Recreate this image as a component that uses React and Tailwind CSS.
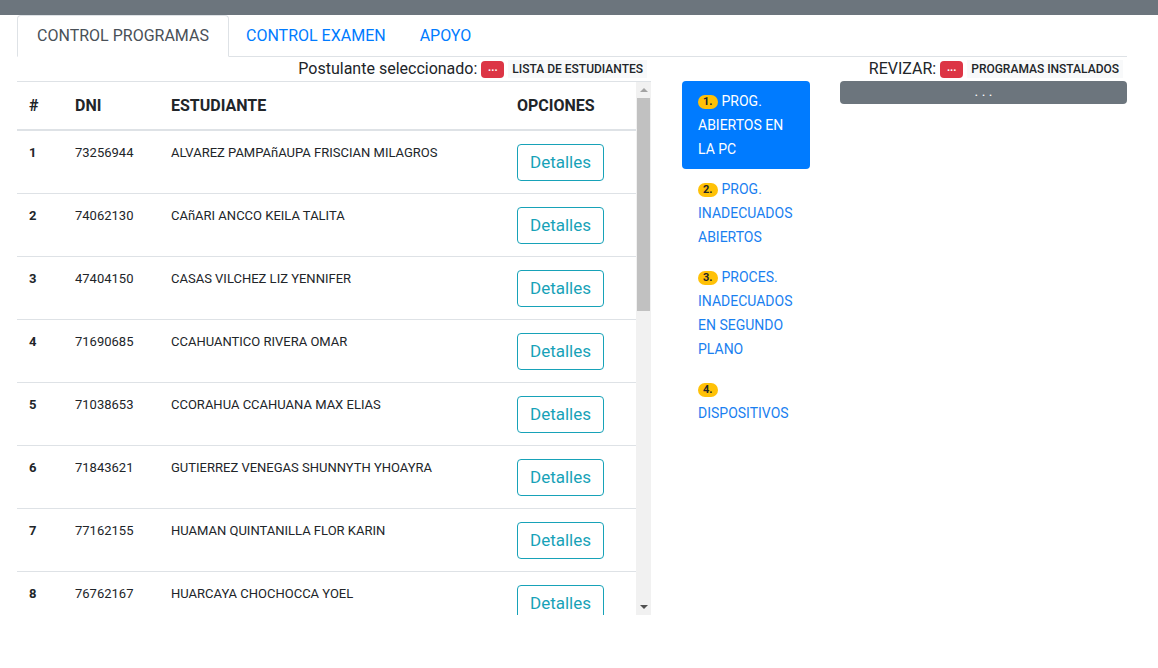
import React from "react";

const ESTUDIANTES = [
  { dni: "73256944", nombre: "ALVAREZ PAMPAñAUPA FRISCIAN MILAGROS" },
  { dni: "74062130", nombre: "CAñARI ANCCO KEILA TALITA" },
  { dni: "47404150", nombre: "CASAS VILCHEZ LIZ YENNIFER" },
  { dni: "71690685", nombre: "CCAHUANTICO RIVERA OMAR" },
  { dni: "71038653", nombre: "CCORAHUA CCAHUANA MAX ELIAS" },
  { dni: "71843621", nombre: "GUTIERREZ VENEGAS SHUNNYTH YHOAYRA" },
  { dni: "77162155", nombre: "HUAMAN QUINTANILLA FLOR KARIN" },
  { dni: "76762167", nombre: "HUARCAYA CHOCHOCCA YOEL" },
];

const OPCIONES = [
  { n: "1.", lines: ["PROG.", "ABIERTOS EN", "LA PC"], active: true },
  { n: "2.", lines: ["PROG.", "INADECUADOS", "ABIERTOS"] },
  { n: "3.", lines: ["PROCES.", "INADECUADOS", "EN SEGUNDO", "PLANO"] },
  { n: "4.", lines: ["", "DISPOSITIVOS"] },
];

function RedBadge() {
  return (
    <span className="inline-flex items-center justify-center w-[23px] h-[17px] rounded-[4px] bg-[#dc3545] text-white text-[11px] font-bold leading-none pb-[3px]">
      ...
    </span>
  );
}

// fake scrollbar for the student list
function Scrollbar() {
  return (
    <div className="w-[15px] h-full bg-[#f1f1f1] flex flex-col items-center shrink-0">
      <div className="h-[16px] w-full flex items-center justify-center">
        <div className="w-0 h-0 border-l-[4px] border-r-[4px] border-b-[4px] border-l-transparent border-r-transparent border-b-[#a3a3a3]" />
      </div>
      <div className="w-[13px] h-[213px] bg-[#c1c1c1]" />
      <div className="flex-1" />
      <div className="h-[16px] w-full flex items-center justify-center">
        <div className="w-0 h-0 border-l-[4px] border-r-[4px] border-t-[4px] border-l-transparent border-r-transparent border-t-[#505050]" />
      </div>
    </div>
  );
}

export default function App() {
  return (
    <div className="w-[1158px] h-[668px] bg-white overflow-hidden font-['Roboto',sans-serif] text-[#212529]">
      {/* top bar */}
      <div className="h-[15px] bg-[#6c757d]" />

      <div className="pl-[17px] pr-[31px]">
        {/* tabs */}
        <div className="flex border-b border-[#dee2e6] h-[42px]">
          <div className="w-[212px] h-[42px] border border-[#dee2e6] border-b-white rounded-t-[4px] bg-white flex items-center justify-center text-[16px] text-[#495057]">
            CONTROL PROGRAMAS
          </div>
          <div className="px-[17px] flex items-center text-[16px] text-[#007bff]">CONTROL EXAMEN</div>
          <div className="px-[17px] flex items-center text-[16px] text-[#007bff]">APOYO</div>
        </div>

        <div className="flex">
          {/* left column */}
          <div className="w-[634px] shrink-0">
            <div className="h-[24px] flex items-center justify-end gap-[4px] pr-[4px]">
              <span className="text-[16px] text-[#212529]">Postulante seleccionado:</span>
              <RedBadge />
              <span className="text-[12px] font-medium text-[#212529] bg-[#f8f9fa] px-[4px] leading-[18px]">LISTA DE ESTUDIANTES</span>
            </div>
            <div className="flex h-[534px] border-t border-[#dee2e6]">
              <div className="flex-1 overflow-hidden">
                <div className="flex h-[49px] border-b-2 border-[#dee2e6] items-center font-bold text-[16px]">
                  <div className="w-[46px] pl-[12px]">#</div>
                  <div className="w-[96px] pl-[12px]">DNI</div>
                  <div className="w-[346px] pl-[12px]">ESTUDIANTE</div>
                  <div className="pl-[12px]">OPCIONES</div>
                </div>
                {ESTUDIANTES.map((e, i) => (
                  <div key={e.dni} className="flex h-[63px] border-b border-[#dee2e6] text-[13px]">
                    <div className="w-[46px] pl-[12px] pt-[12px] font-bold leading-[19px]">{i + 1}</div>
                    <div className="w-[96px] pl-[12px] pt-[12px] leading-[19px]">{e.dni}</div>
                    <div className="w-[346px] pl-[12px] pt-[12px] leading-[19px]">{e.nombre}</div>
                    <div className="pl-[12px] pt-[13px]">
                      <button className="w-[87px] h-[37px] border border-[#17a2b8] rounded-[4px] text-[#17a2b8] text-[17px] leading-none">
                        Detalles
                      </button>
                    </div>
                  </div>
                ))}
              </div>
              <Scrollbar />
            </div>
          </div>

          {/* right area */}
          <div className="flex-1 pl-[31px]">
            <div className="h-[24px] flex items-center justify-end gap-[4px] pr-[4px]">
              <span className="text-[16px] text-[#212529]">REVIZAR:</span>
              <RedBadge />
              <span className="text-[12px] font-medium text-[#212529] bg-[#f8f9fa] px-[4px] leading-[18px]">PROGRAMAS INSTALADOS</span>
            </div>
            <div className="flex gap-[30px]">
              <div className="w-[128px] shrink-0 flex flex-col">
                {OPCIONES.map((o) => (
                  <div
                    key={o.n}
                    className={
                      o.active
                        ? "bg-[#007bff] text-white rounded-[4px] px-[16px] py-[8px] text-[14px] leading-[24px]"
                        : "text-[#1a7ff0] px-[16px] py-[8px] text-[14px] leading-[24px]"
                    }
                  >
                    {o.lines.map((l, j) => (
                      <div key={j}>
                        {j === 0 && (
                          <span className="inline-block bg-[#ffc107] text-[#212529] text-[11px] font-bold rounded-full px-[5px] leading-[14px] mr-[4px] align-middle">
                            {o.n}
                          </span>
                        )}
                        {l}
                      </div>
                    ))}
                  </div>
                ))}
              </div>
              <div className="flex-1">
                <div className="h-[23px] bg-[#6c757d] rounded-[4px] text-white text-[14px] flex items-center justify-center leading-none pb-[4px]">
                  . . .
                </div>
              </div>
            </div>
          </div>
        </div>
      </div>
    </div>
  );
}
